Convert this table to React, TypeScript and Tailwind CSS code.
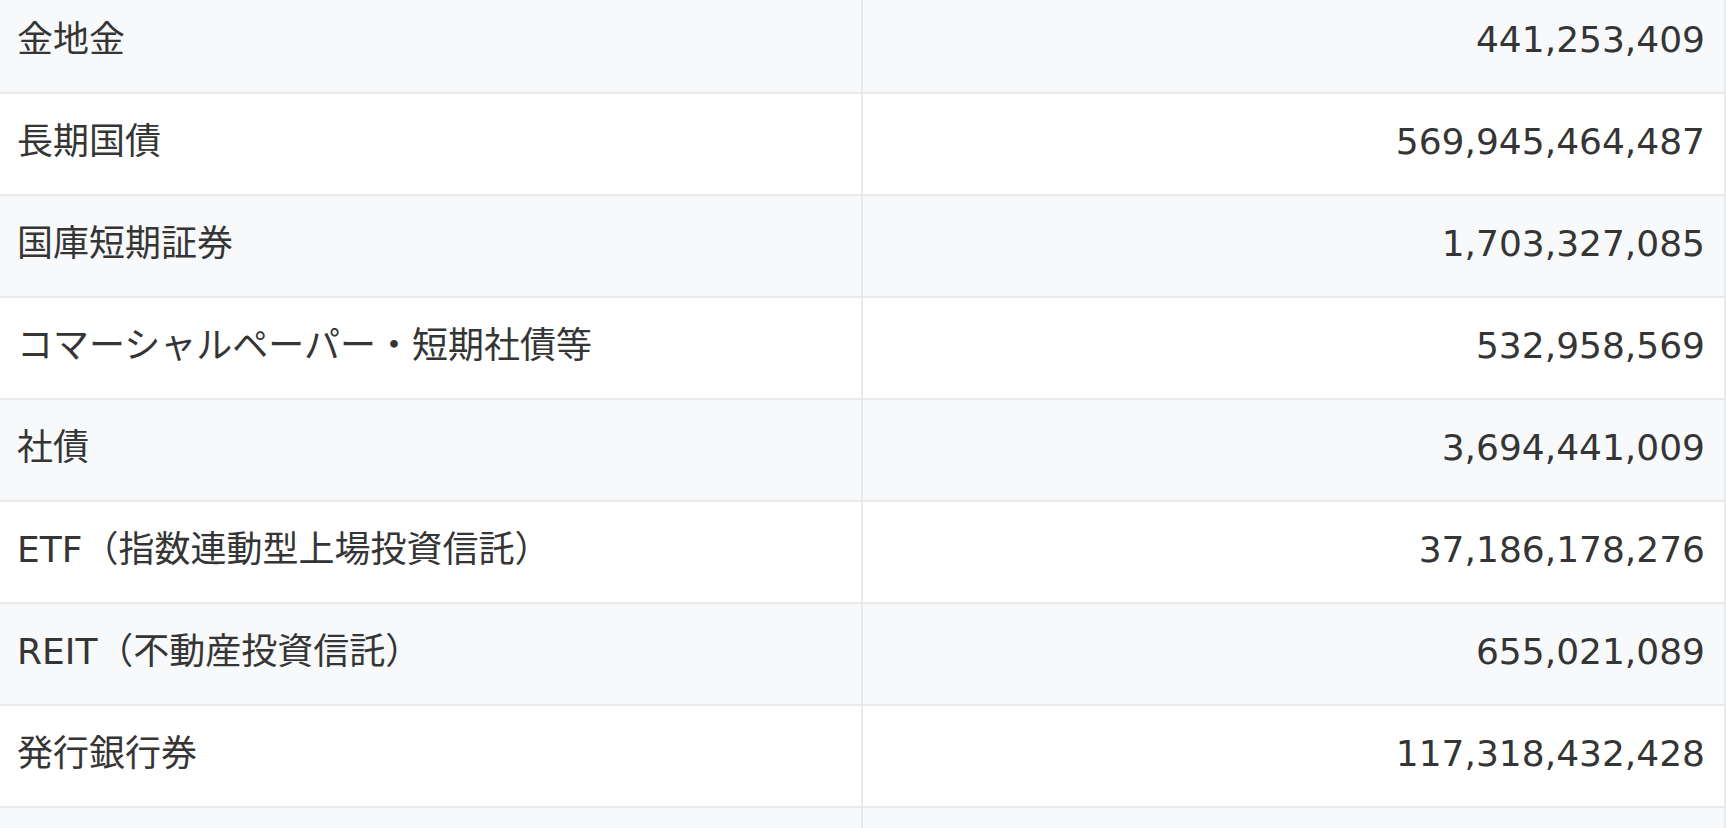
const rows: [string, string][] = [
  ["金地金", "441,253,409"],
  ["長期国債", "569,945,464,487"],
  ["国庫短期証券", "1,703,327,085"],
  ["コマーシャルペーパー・短期社債等", "532,958,569"],
  ["社債", "3,694,441,009"],
  ["ETF（指数連動型上場投資信託）", "37,186,178,276"],
  ["REIT（不動産投資信託）", "655,021,089"],
  ["発行銀行券", "117,318,432,428"],
  ["", ""],
];

export default function App() {
  return (
    <div className="w-[1726px] h-[828px] overflow-hidden bg-white">
      <div
        className="-mt-[8px] text-[36px] leading-none text-[#353535]"
        style={{ fontFamily: '"DejaVu Sans", "Noto Sans CJK JP", sans-serif' }}
      >
        {rows.map(([label, value], i) => (
          <div
            key={i}
            className={`grid grid-cols-2 h-[102px] border-b-2 border-[#e9eaec] ${
              i % 2 === 0 ? "bg-[#f8f9fb]" : "bg-white"
            }`}
          >
            <div className="flex items-center pl-[17px] pb-[4px] border-r-2 border-[#e9eaec] whitespace-nowrap">
              {label}
            </div>
            <div className="flex items-center justify-end pr-[19px] pb-[4px] border-r-2 border-[#e9eaec]">
              {value}
            </div>
          </div>
        ))}
      </div>
    </div>
  );
}
